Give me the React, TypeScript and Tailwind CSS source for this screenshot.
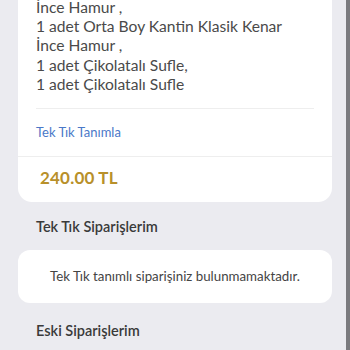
import React from "react";

export default function App() {
  return (
    <div className="flex h-[350px] w-[350px] overflow-hidden bg-[#ebebf0]" style={{ fontFamily: "Lato, 'Noto Sans', sans-serif" }}>
      <div className="flex w-[346px] flex-col">
        <div className="-mt-[2px] ml-[18px] w-[314px] rounded-b-[14px] bg-white">
          <div className="px-[18px] pb-[14px] text-[15.6px] leading-[19.2px] text-[#4a4a4a]">
            <div>İnce Hamur ,</div>
            <div>1 adet Orta Boy Kantin Klasik Kenar</div>
            <div>İnce Hamur ,</div>
            <div>1 adet Çikolatalı Sufle,</div>
            <div>1 adet Çikolatalı Sufle</div>
          </div>
          <div className="mx-[18px] h-px bg-[#eeeeee]" />
          <div className="px-[18px] pt-[15px] pb-[16px] text-[13px] leading-[16px] text-[#4a78c8]">Tek Tık Tanımla</div>
          <div className="h-px bg-[#eeeeee]" />
          <div className="px-[22px] pt-[11px] pb-[14px] text-[17px] font-bold leading-[20px] tracking-[0.2px] text-[#b8902a]">240.00 TL</div>
        </div>
        <div className="ml-[36px] mt-[16px] text-[14.5px] font-semibold leading-[18px] text-[#3a3a3a]">Tek Tık Siparişlerim</div>
        <div className="ml-[18px] mt-[14px] flex h-[53px] w-[314px] items-center justify-center rounded-[12px] bg-white text-[13.3px] text-[#444]">
          Tek Tık tanımlı siparişiniz bulunmamaktadır.
        </div>
        <div className="ml-[36px] mt-[19px] text-[14.5px] font-semibold leading-[18px] text-[#3a3a3a]">Eski Siparişlerim</div>
      </div>
      <div className="h-full w-[4px] bg-[#7a7a7e]" />
    </div>
  );
}
